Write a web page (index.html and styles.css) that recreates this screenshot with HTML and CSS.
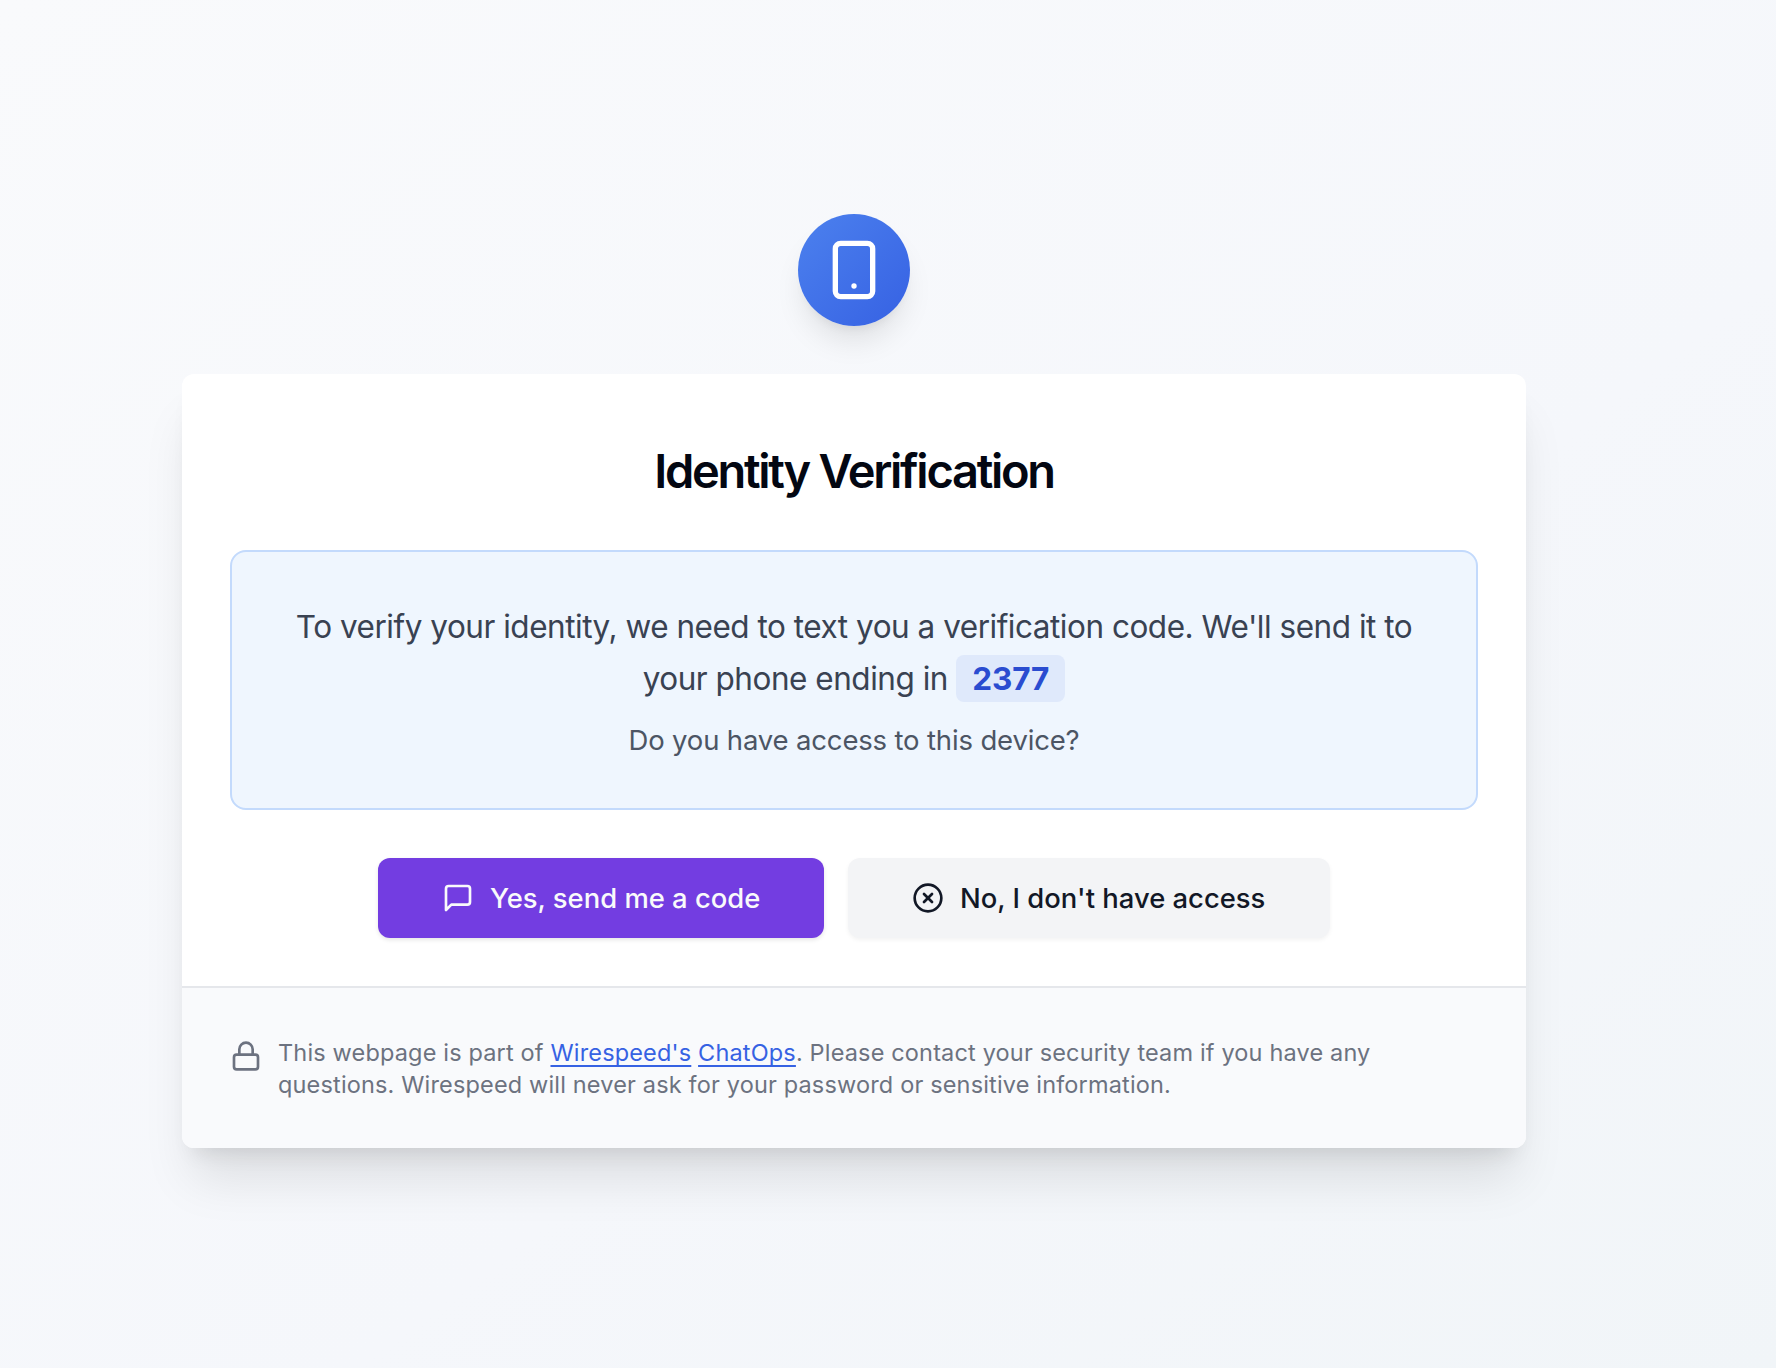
FILE: index.html
```html
<!DOCTYPE html>
<html lang="en">
<head>
    <meta charset="UTF-8">
    <meta name="viewport" content="width=device-width, initial-scale=1.0">
    <title>Identity Verification</title>
    <link rel="stylesheet" href="styles.css">
</head>
<body>
    <main class="page">
        <div class="badge">
            <svg class="badge-icon" viewBox="0 0 24 24">
                <rect x="5" y="2" width="14" height="20" rx="2" />
                <path d="M12 18h.01" />
            </svg>
        </div>

        <div class="card">
            <div class="card-body">
                <h1>Identity Verification</h1>

                <div class="notice">
                    <p class="notice-text">
                        To verify your identity, we need to text you a verification code. We'll send it to<br>
                        your phone ending in <span class="digits">2377</span>
                    </p>
                    <p class="notice-question">Do you have access to this device?</p>
                </div>

                <div class="actions">
                    <button class="btn btn-yes">
                        <svg class="icon" viewBox="0 0 24 24">
                            <path d="M21 15a2 2 0 0 1-2 2H7l-4 4V5a2 2 0 0 1 2-2h14a2 2 0 0 1 2 2z" />
                        </svg>
                        <span>Yes, send me a code</span>
                    </button>
                    <button class="btn btn-no">
                        <svg class="icon" viewBox="0 0 24 24">
                            <circle cx="12" cy="12" r="10" />
                            <path d="m15 9-6 6" />
                            <path d="m9 9 6 6" />
                        </svg>
                        <span>No, I don't have access</span>
                    </button>
                </div>
            </div>

            <div class="card-footer">
                <svg class="icon lock" viewBox="0 0 24 24">
                    <rect x="3" y="11" width="18" height="11" rx="2" />
                    <path d="M7 11V7a5 5 0 0 1 10 0v4" />
                </svg>
                <p>
                    This webpage is part of <a href="#">Wirespeed's</a> <a href="#">ChatOps</a>. Please contact your security team if you have any<br>
                    questions. Wirespeed will never ask for your password or sensitive information.
                </p>
            </div>
        </div>
    </main>
</body>
</html>
```

FILE: styles.css
```css
* {
    box-sizing: border-box;
}
body {
    margin: 0;
    font-family: Inter, "Liberation Sans", sans-serif;
    background: #f5f7fb;
}
h1, p {
    margin: 0;
}
svg {
    display: block;
    flex-shrink: 0;
    fill: none;
    stroke: currentColor;
    stroke-width: 2;
    stroke-linecap: round;
    stroke-linejoin: round;
}
.page {
    min-height: 1368px;
    padding: 214px 250px 0 182px;
    display: flex;
    flex-direction: column;
    align-items: center;
    gap: 48px;
    background: linear-gradient(to bottom right, #f9fafc, #f5f7fb 60%, #f1f5f8);
}
.badge {
    width: 112px;
    height: 112px;
    display: flex;
    align-items: center;
    justify-content: center;
    border-radius: 50%;
    color: #fff;
    background: linear-gradient(to bottom right, #4c81ee, #3661e3);
    box-shadow: 0 20px 30px -6px rgba(0, 0, 0, 0.1), 0 8px 12px -8px rgba(0, 0, 0, 0.1);
}
.badge-icon {
    width: 64px;
    height: 64px;
}
.card {
    width: 1344px;
    border-radius: 12px;
    background: #fff;
    box-shadow: 0 40px 50px -10px rgba(0, 0, 0, 0.1), 0 16px 20px -12px rgba(0, 0, 0, 0.1);
}
.card-body {
    padding: 65px 48px 48px;
}
h1 {
    font-size: 47px;
    line-height: 64px;
    font-weight: 600;
    letter-spacing: -2.28px;
    text-align: center;
    color: #030712;
}
.notice {
    height: 260px;
    margin: 47px 0 48px;
    padding: 49px 0 0;
    border: 2px solid #c3dafc;
    border-radius: 16px;
    background: #eff6fe;
    text-align: center;
}
.notice-text {
    font-size: 31.5px;
    line-height: 52px;
    letter-spacing: -0.48px;
    color: #394252;
}
.digits {
    padding: 4px 16px;
    border-radius: 8px;
    background: #dfe9fb;
    color: #2a4cd0;
    font-weight: 700;
    letter-spacing: -0.1px;
}
.notice-question {
    margin-top: 15px;
    font-size: 27.5px;
    line-height: 40px;
    letter-spacing: -0.16px;
    color: #4c5564;
}
.actions {
    display: flex;
    justify-content: center;
    gap: 24px;
}
.btn {
    height: 80px;
    padding: 0 0 0 64px;
    display: flex;
    align-items: center;
    gap: 16px;
    border: none;
    border-radius: 12px;
    font-family: inherit;
    font-size: 27.4px;
    font-weight: 500;
    white-space: nowrap;
    cursor: pointer;
    box-shadow: 0 2px 4px rgba(0, 0, 0, 0.1);
}
.btn-yes {
    width: 446px;
    background: #733de1;
    color: #f9fafb;
}
.btn-no {
    width: 482px;
    background: #f3f4f6;
    color: #121826;
    box-shadow: 0 2px 4px rgba(0, 0, 0, 0.05);
}
.icon {
    width: 32px;
    height: 32px;
}
.card-footer {
    height: 162px;
    padding: 48px;
    display: flex;
    gap: 16px;
    border-top: 2px solid #e5e7eb;
    border-radius: 0 0 12px 12px;
    background: #f9fafc;
    color: #6c7280;
    font-size: 23.5px;
    line-height: 32px;
    letter-spacing: 0.16px;
    white-space: nowrap;
}
.card-footer p {
    padding-top: 1px;
}
.lock {
    margin-top: 4px;
}
.card-footer a {
    color: #3662e3;
    text-decoration: underline 2px;
    text-decoration-skip-ink: none;
    text-underline-offset: 4px;
}
```
